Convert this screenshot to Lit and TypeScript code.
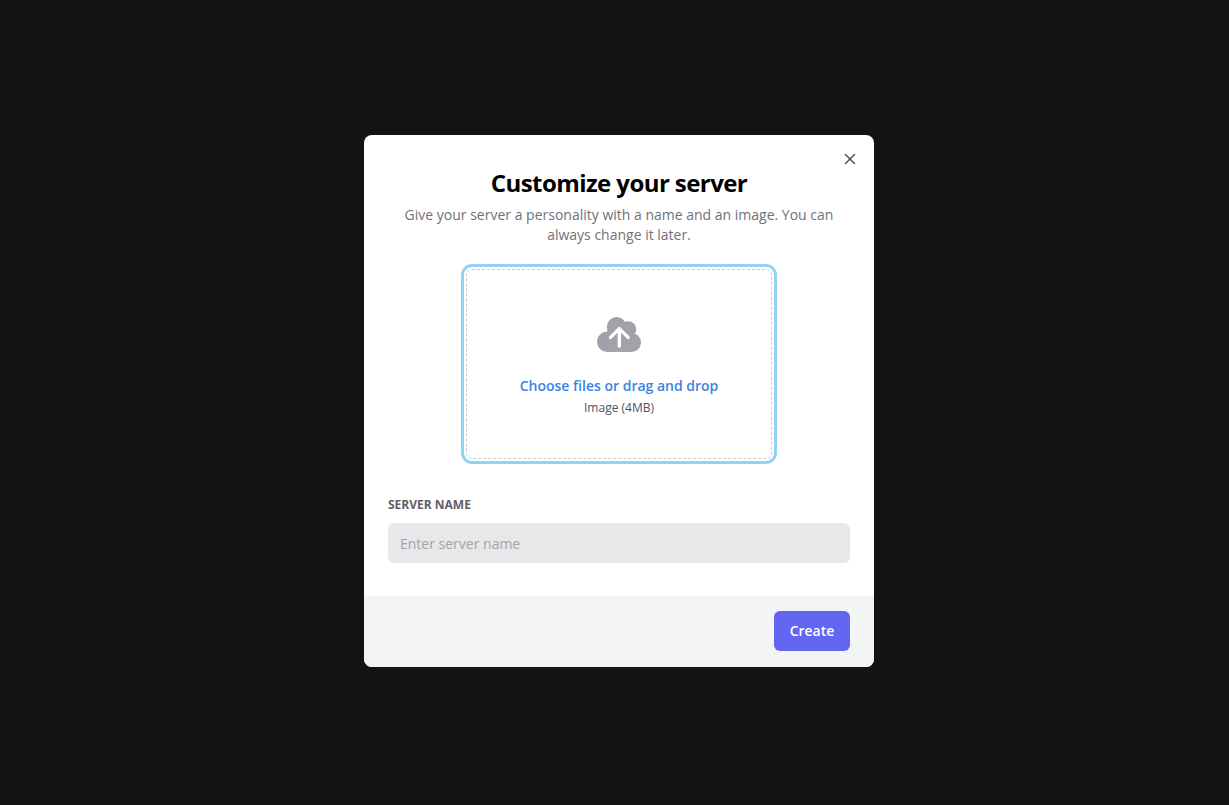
import { LitElement, html, css } from "lit";
import { customElement } from "lit/decorators.js";

@customElement("app-root")
export class AppRoot extends LitElement {
  static styles = css`
    :host {
      display: flex;
      align-items: flex-start;
      justify-content: center;
      width: 100%;
      height: 805px;
      background: #131313;
      font-family: "Open Sans", sans-serif;
      padding: 135px 0 0 9px;
      box-sizing: border-box;
      overflow: hidden;
    }
    .modal {
      position: relative;
      width: 510px;
      height: 532px;
      background: #fff;
      border-radius: 8px;
      overflow: hidden;
      display: flex;
      flex-direction: column;
    }
    .close {
      position: absolute;
      top: 17px;
      right: 17px;
      width: 14px;
      height: 14px;
      color: #4b5058;
    }
    .header {
      padding: 32px 24px 0;
      text-align: center;
    }
    h1 {
      margin: 0;
      font-size: 24px;
      line-height: 32px;
      font-weight: 700;
      color: #000;
      letter-spacing: -0.58px;
    }
    .desc {
      margin: 6px 0 0;
      font-size: 14px;
      line-height: 20px;
      color: #71717a;
    }
    .body {
      padding: 0 24px;
      flex: 1;
    }
    .drop-wrap {
      display: flex;
      justify-content: center;
      margin-top: 19px;
    }
    .drop {
      width: 316px;
      height: 200px;
      box-sizing: border-box;
      border: 3px solid #90d3f5;
      border-radius: 11px;
      padding: 2px;
    }
    .drop-inner {
      height: 100%;
      box-sizing: border-box;
      border: 1px dashed #c8cacd;
      border-radius: 6px;
      display: flex;
      flex-direction: column;
      align-items: center;
    }
    .cloud {
      width: 44px;
      height: 35px;
      margin-top: 47px;
      color: #a1a1aa;
      display: block;
    }
    .choose {
      margin-top: 24px;
      font-size: 14px;
      line-height: 20px;
      font-weight: 600;
      color: #3b82e6;
    }
    .hint {
      margin-top: 2px;
      font-size: 12px;
      line-height: 20px;
      color: #4b5563;
    }
    label {
      display: block;
      margin-top: 33px;
      font-size: 12px;
      line-height: 16px;
      font-weight: 700;
      color: #5f5f66;
    }
    .input {
      margin-top: 10px;
      height: 40px;
      box-sizing: border-box;
      background: #e8e8ea;
      border-radius: 6px;
      padding: 0 12px;
      display: flex;
      align-items: center;
      font-size: 14px;
      color: #a3a3a8;
    }
    .footer {
      height: 71px;
      box-sizing: border-box;
      background: #f3f4f6;
      padding: 15px 24px 0;
      display: flex;
      align-items: flex-start;
      justify-content: flex-end;
    }
    .create {
      width: 76px;
      height: 40px;
      box-sizing: border-box;
      padding-bottom: 2px;
      border-radius: 6px;
      background: #6366f1;
      color: #fff;
      font-size: 14px;
      font-weight: 600;
      display: flex;
      align-items: center;
      justify-content: center;
    }
  `;

  render() {
    return html`
      <div class="modal">
        <svg class="close" viewBox="0 0 14 14" fill="none" stroke="currentColor" stroke-width="1.5" stroke-linecap="round">
          <path d="M2.5 2.5l9 9M11.500 2.500l-9 9" />
        </svg>
        <div class="header">
          <h1>Customize your server</h1>
          <p class="desc">Give your server a personality with a name and an image. You can always change it later.</p>
        </div>
        <div class="body">
          <div class="drop-wrap">
            <div class="drop">
              <div class="drop-inner">
                <svg class="cloud" viewBox="0 0 130 103">
                  <g fill="currentColor">
                    <circle cx="30" cy="73" r="30" />
                    <circle cx="58" cy="29" r="29" />
                    <circle cx="92" cy="36" r="24" />
                    <circle cx="102" cy="75" r="28" />
                    <rect x="30" y="40" width="72" height="63" />
                  </g>
                  <path fill="none" stroke="#fff" stroke-width="10" stroke-linecap="round" stroke-linejoin="round" d="M66 86V34M40 60L66 34L92 60" />
                </svg>
                <div class="choose">Choose files or drag and drop</div>
                <div class="hint">Image (4MB)</div>
              </div>
            </div>
          </div>
          <label>SERVER NAME</label>
          <div class="input">Enter server name</div>
        </div>
        <div class="footer"><div class="create">Create</div></div>
      </div>
    `;
  }
}
